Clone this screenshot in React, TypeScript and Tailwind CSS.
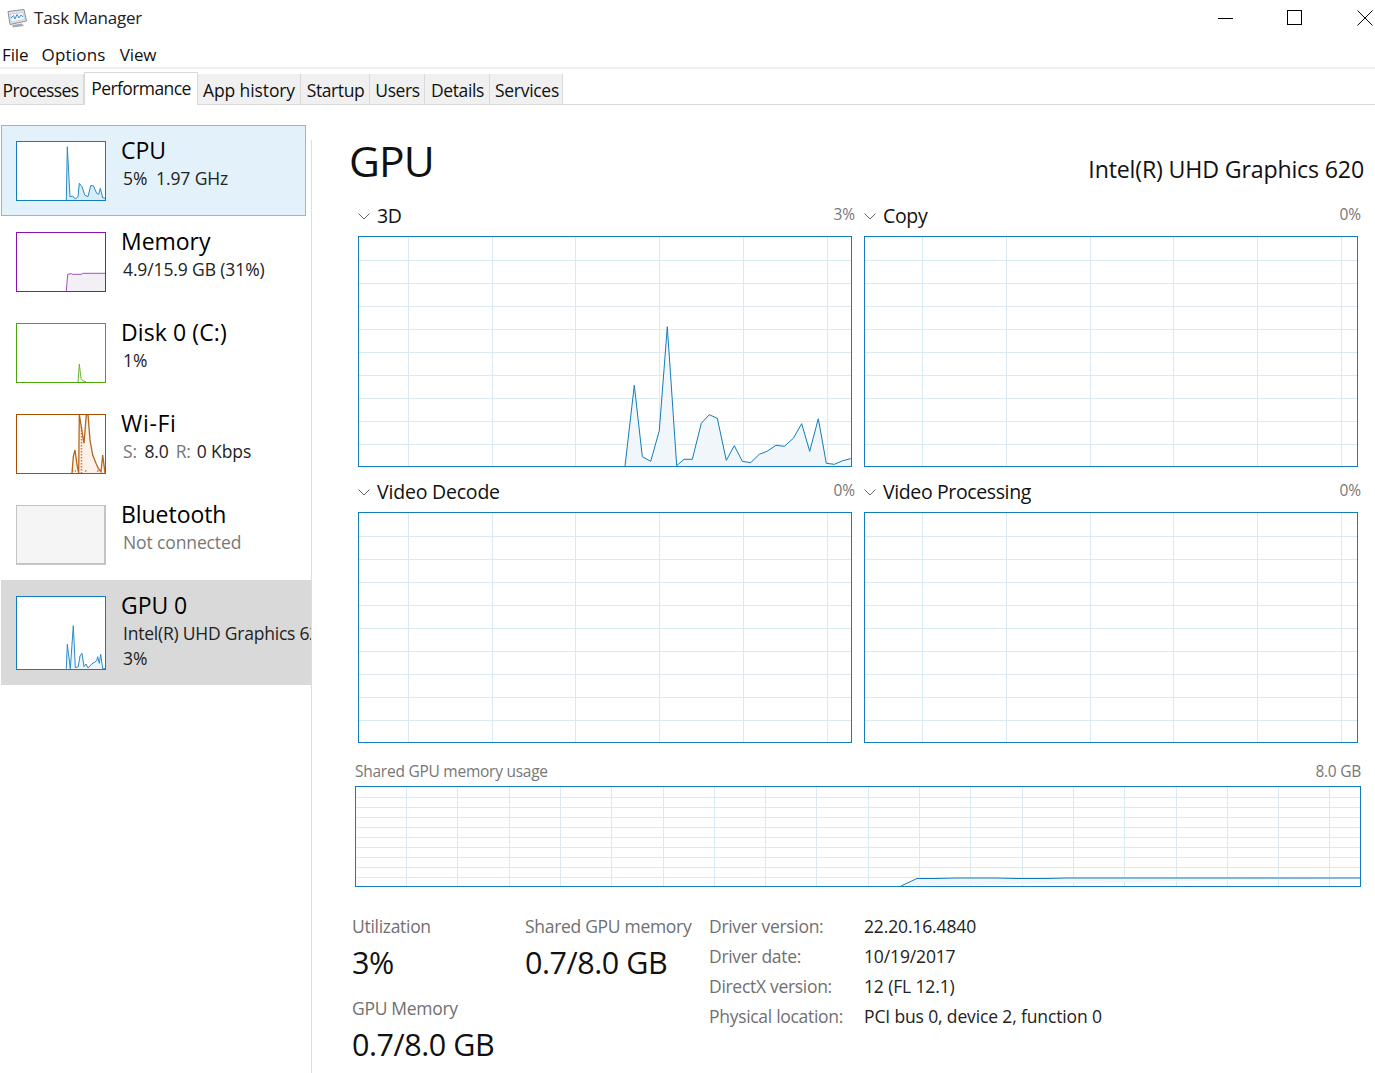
import React from "react";

type P = [number, number];
const BLUE = "#117dbb";
const GRID = "#d9eaf4";

function line(pts: P[]) {
  return pts.map((p) => p[0].toFixed(1) + "," + p[1].toFixed(1)).join(" ");
}

const gpu3d: P[] = [
  [15, 438],[43, 196],[67, 410],[92, 424],[118, 332],[142, 20],[170, 437],[192, 418],[217, 418],[244, 310],
  [268, 284],[292, 295],[319, 421],[343, 377],[367, 424],[392, 428],[418, 403],[441, 394],[468, 376],[493, 379],
  [520, 355],[545, 311],[569, 394],[595, 296],[619, 430],[643, 433],[668, 422],[692, 416],
].map(([x, y]) => [261 + x / 3, 83 + y / 3] as P);

function Spark({ pts, dx = 17, dy, stroke, fill, h = 58, sw = 1, extra }: { pts: P[]; dx?: number; dy: number; stroke: string; fill: string; h?: number; sw?: number; extra?: React.ReactNode }) {
  const p = pts.map(([x, y]) => [x / 3 - dx, y / 3 - dy] as P);
  const area = line([[p[0][0], h], ...p, [p[p.length - 1][0], h]]);
  return (
    <svg width="88" height={h} viewBox={`0 0 88 ${h}`} className="block">
      <polygon points={area} fill={fill} />
      {extra}
      <polyline points={line(p)} fill="none" stroke={stroke} strokeWidth={sw} />
    </svg>
  );
}

function Row({ name, color, children, graphH = 60, className = "", nameClass = "tracking-[-0.05px]", graph }: { name: string; color: string; children: React.ReactNode; graphH?: number; className?: string; nameClass?: string; graph?: React.ReactNode }) {
  return (
    <div className={`flex items-start overflow-hidden whitespace-nowrap ${className}`}>
      <div className="mt-[4px] w-[90px] shrink-0 border bg-white" style={{ borderColor: color, height: graphH }}>
        {graph}
      </div>
      <div className="ml-[15px] -mt-[1px] flex flex-col">
        <div className={`text-[23px] leading-[28px] text-black ${nameClass}`}>{name}</div>
        <div className="ml-[2px] flex flex-col text-[17.5px] leading-[28px] tracking-[-0.12px] text-[#222]">{children}</div>
      </div>
    </div>
  );
}

function Chevron() {
  return (
    <svg width="12" height="7" viewBox="0 0 12 7" className="shrink-0">
      <path d="M0.5 0.5L6 6L11.5 0.5" fill="none" stroke="#666" strokeWidth="1" />
    </svg>
  );
}

function EngineChart({ name, pct, vx, pts, nameClass = "tracking-[-0.32px]" }: { name: string; pct: string; vx: number[]; pts?: P[]; nameClass?: string }) {
  const hy = [23, 46, 69, 92, 115, 138, 161, 184, 207];
  return (
    <div className="flex w-[494px] flex-col">
      <div className="relative flex h-[40px] items-center">
        <div className="flex w-[19px] justify-start"><Chevron /></div>
        <span className={`text-[19.5px] leading-[28px] text-[#111] ${nameClass}`}>{name}</span>
        <span className="absolute right-[-3px] top-[8px] text-[15.5px] leading-[20px] tracking-[-0.15px] text-[#777]">{pct}</span>
      </div>
      <div className="h-[231px] w-[494px] border border-[#117dbb] bg-white">
        <svg width="492" height="229" viewBox="0 0 492 229" className="block">
          {hy.map((y) => (
            <line key={y} x1="0" x2="492" y1={y + 0.5} y2={y + 0.5} stroke={GRID} />
          ))}
          {vx.map((x) => (
            <line key={x} x1={x + 0.5} x2={x + 0.5} y1="0" y2="229" stroke={GRID} />
          ))}
          {pts && <polygon points={line([[pts[0][0], 229], ...pts, [492, 229]])} fill="#f1f6fa" />}
          {pts && <polyline points={line(pts)} fill="none" stroke={BLUE} strokeWidth="1" />}
        </svg>
      </div>
    </div>
  );
}

const leftV = [49, 133, 216, 300, 384, 468];
const rightV = [57, 141, 225, 308, 392, 476];
const sharedV = Array.from({ length: 19 }, (_, i) => Math.round(50 + i * 51.3));
const sharedH = [10, 20, 30, 40, 50, 60, 70, 80, 90];
const sharedLine: P[] = [[545, 99],[561, 91.5],[580, 91.5],[600, 91],[640, 91],[660, 91.5],[690, 91.5],[710, 91],[1004, 91]];

function Stat({ label, value, className = "" }: { label: string; value: string; className?: string }) {
  return (
    <div className={className}>
      <div className="text-[17.5px] leading-[24px] tracking-[-0.3px] text-[#707070]">{label}</div>
      <div className="mt-[4px] text-[30.5px] leading-[40px] tracking-[-0.45px] text-[#111]">{value}</div>
    </div>
  );
}

export default function App() {
  const tabs = [
    { t: "Processes", w: "w-[84px]", k: "tracking-[-0.6px] pr-[2px]" },
    { t: "Performance", w: "w-[114px]", k: "tracking-[-0.6px]" },
    { t: "App history", w: "w-[103px]", k: "tracking-[-0.1px]" },
    { t: "Startup", w: "w-[69px]", k: "tracking-[-0.4px] pl-[1px]" },
    { t: "Users", w: "w-[55px]", k: "tracking-[-0.4px] pl-[1px]" },
    { t: "Details", w: "w-[65px]", k: "tracking-[-0.4px] pl-[1px]" },
    { t: "Services", w: "w-[73px]", k: "tracking-[-0.3px] pl-[2px]" },
  ];
  return (
    <div className="flex h-[1073px] w-[1375px] flex-col overflow-hidden bg-white font-['Open_Sans',sans-serif] text-black">
      <div className="flex h-[36px] items-center justify-between">
        <div className="flex items-center pl-[6px]">
          <svg width="22" height="20" viewBox="0 0 22 20" className="mr-[6px]">
            <path d="M2 3.5L18 1.5L20.5 13L4 16.5Z" fill="#dfe6ee" stroke="#8a8f96" />
            <path d="M4 6L17 4.5L18.5 11.5L5.5 14Z" fill="#f5f9fd" stroke="#b0b5bb" strokeWidth="0.5" />
            <path d="M5 10L7.5 7.5L9 11L11 6.5L13 10L15 7L17 9" fill="none" stroke="#3a8fd0" strokeWidth="1" />
            <path d="M6 17L16 15.5L18 18L7 19.5Z" fill="#a8adb3" />
          </svg>
          <span className="text-[17px] leading-[24px] tracking-[-0.22px] text-[#222]">Task Manager</span>
        </div>
        <div className="flex items-center pr-[1px]">
          <svg width="16" height="16" viewBox="0 0 16 16" className="mr-[53px]"><path d="M0 8.5H15" stroke="#000" /></svg>
          <svg width="16" height="16" viewBox="0 0 16 16" className="mr-[54px]"><rect x="0.5" y="0.5" width="14" height="14" fill="none" stroke="#000" /></svg>
          <svg width="17" height="16" viewBox="0 0 17 16"><path d="M0.5 0.5L15.5 15.5M15.5 0.5L0.5 15.5" stroke="#000" /></svg>
        </div>
      </div>
      <div className="flex h-[33px] items-center border-b-2 border-[#f0f0f0] pl-[2px] pt-[7px] text-[17px] leading-[24px] tracking-[-0.1px] text-[#111]">
        <span className="mr-[13px]">File</span>
        <span className="mr-[14px] tracking-[0.2px]">Options</span>
        <span>View</span>
      </div>
      <div className="flex h-[36px] items-end border-b border-[#d9d9d9] text-[17.5px]">
        {tabs.map((x, i) =>
          i === 1 ? (
            <div key={x.t} className={`relative -mb-px flex h-[33px] ${x.w} ${x.k} items-start justify-center border-x border-t border-[#d9d9d9] bg-white pt-[1px] leading-[28px] text-[#111]`}>
              {x.t}
            </div>
          ) : (
            <div key={x.t} className={`flex h-[30px] ${x.w} ${x.k} items-center justify-center border-r border-[#d9d9d9] bg-[#f0f0f0] pt-[2px] leading-[28px] text-[#111]`}>
              {x.t}
            </div>
          )
        )}
      </div>
      <div className="flex flex-1">
        <div className="flex w-[311px] shrink-0 flex-col pl-px pt-[20px]">
          <Row
            name="CPU"
            color={BLUE}
            className="h-[91px] w-[305px] border border-[#7cc0e8] bg-[#e3f2fa] pl-[14px] pt-[11px]"
            graph={
              <Spark
                stroke="#2a8ac6"
                fill="#dbecf6"
                dy={17}
                pts={[[199, 225],[202, 65],[210, 215],[218, 213],[226, 222],[234, 215],[238, 175],[246, 185],[254, 210],[264, 215],[272, 182],[280, 182],[290, 205],[296, 208],[301, 190],[308, 218],[316, 220]]}
              />
            }
          >
            <span>5%&nbsp; 1.97 GHz</span>
          </Row>
          <Row
            name="Memory"
            color="#8b12ae"
            className="h-[91px] pl-[15px] pt-[12px]"
            graph={<Spark stroke="#a64fc4" fill="#f2eff5" dy={108} pts={[[199, 498],[203, 448],[215, 446],[218, 448],[246, 448],[248, 445],[316, 445]]} />}
          >
            <span>4.9/15.9 GB (31%)</span>
          </Row>
          <Row
            name="Disk 0 (C:)"
            color="#4da60c"
            nameClass="tracking-[0.1px]"
            className="h-[91px] pl-[15px] pt-[12px]"
            graph={<Spark stroke="#6cb33a" fill="#eef6e6" dy={24} pts={[[234, 246],[238, 192],[243, 235],[250, 243],[258, 245]]} />}
          >
            <span>1%</span>
          </Row>
          <Row
            name="Wi-Fi"
            color="#a74f01"
            nameClass="tracking-[0.7px]"
            className="h-[91px] pl-[15px] pt-[12px]"
            graph={
              <Spark
                stroke="#b5651d"
                fill="#fdf2ea"
                dy={15}
                sw={1.3}
                pts={[[216, 219],[220, 170],[225, 150],[232, 200],[236, 219],[238, 44],[252, 130],[259, 44],[264, 44],[270, 120],[278, 165],[288, 190],[295, 205],[303, 215],[308, 165],[315, 219]]}
                extra={<path d="M64.5 12V58M55 56H59M68 56H71M80 56H84" stroke="#ee6a2a" strokeWidth="1.5" strokeDasharray="1.5 1.5" fill="none" />}
              />
            }
          >
            <span><span className="text-[#777]">S:</span> <span className="ml-[3px]">8.0</span><span className="ml-[7px] text-[#777]">R:</span><span className="ml-[6px]">0 Kbps</span></span>
          </Row>
          <Row
            name="Bluetooth"
            color="#c4c4c4"
            className="h-[91px] pl-[15px] pt-[12px]"
            graph={<div className="h-full w-full border-b border-r border-[#c4c4c4] bg-[#f5f5f5]" />}
          >
            <span className="text-[#777]">Not connected</span>
          </Row>
          <Row
            name="GPU 0"
            color={BLUE}
            graphH={74}
            className="h-[105px] w-[310px] bg-[#d9d9d9] pl-[15px] pt-[12px]"
            graph={
              <Spark
                stroke="#2a8ac6"
                fill="#eef5fa"
                dy={197}
                h={72}
                pts={[[199, 806],[202, 733],[211, 806],[220, 677],[226, 803],[235, 800],[240, 768],[246, 760],[252, 800],[258, 792],[264, 804],[275, 792],[290, 782],[293, 770],[298, 790],[302, 763],[308, 806],[316, 806]]}
              />
            }
          >
            <span className="tracking-[-0.22px]">Intel(R) UHD Graphics 620</span>
            <span className="-mt-[3px]">3%</span>
          </Row>
        </div>
        <div className="mt-[35px] w-px shrink-0 bg-[#dddddd]" />
        <div className="flex min-w-0 flex-1 flex-col">
          <div className="flex h-[91px] items-start justify-between pl-[37px] pr-[11px]">
            <span className="mt-[23px] text-[42.5px] leading-[66px] tracking-[-0.8px] text-[#111]">GPU</span>
            <span className="mt-[46px] text-[23.2px] leading-[36px] tracking-[-0.18px] text-[#111]">Intel(R) UHD Graphics 620</span>
          </div>
          <div className="ml-[46px] grid w-[1000px] grid-cols-[494px_494px] gap-x-[12px] gap-y-[5px]">
            <EngineChart name="3D" pct="3%" vx={leftV} pts={gpu3d} />
            <EngineChart name="Copy" pct="0%" vx={rightV} />
            <EngineChart name="Video Decode" pct="0%" vx={leftV} nameClass="tracking-[-0.2px]" />
            <EngineChart name="Video Processing" pct="0%" vx={rightV} nameClass="tracking-[-0.38px]" />
          </div>
          <div className="ml-[43px] mb-[1px] mt-[14px] flex w-[1006px] items-center justify-between text-[15.5px] leading-[28px] tracking-[-0.25px] text-[#777]">
            <span>Shared GPU memory usage</span>
            <span>8.0 GB</span>
          </div>
          <div className="ml-[43px] h-[101px] w-[1006px] border border-[#117dbb]">
            <svg width="1004" height="99" viewBox="0 0 1004 99" className="block">
              {sharedH.map((y) => (
                <line key={y} x1="0" x2="1004" y1={y + 0.5} y2={y + 0.5} stroke={GRID} />
              ))}
              {sharedV.map((x) => (
                <line key={x} x1={x + 0.5} x2={x + 0.5} y1="0" y2="99" stroke={GRID} />
              ))}
              <polygon points={line(sharedLine)} fill="#f1f6fa" />
              <polyline points={line(sharedLine)} fill="none" stroke={BLUE} strokeWidth="1" />
            </svg>
          </div>
          <div className="ml-[40px] mt-[27px] flex">
            <div className="flex w-[173px] flex-col">
              <Stat label="Utilization" value="3%" />
              <Stat label="GPU Memory" value="0.7/8.0 GB" className="mt-[14px]" />
            </div>
            <Stat label="Shared GPU memory" value="0.7/8.0 GB" className="w-[184px]" />
            <div className="grid auto-rows-[30px] grid-cols-[155px_auto] text-[17.5px] leading-[24px] tracking-[-0.3px]">
              <span className="text-[#707070]">Driver version:</span>
              <span className="tracking-[-0.14px] text-[#222]">22.20.16.4840</span>
              <span className="text-[#707070]">Driver date:</span>
              <span className="tracking-[-0.14px] text-[#222]">10/19/2017</span>
              <span className="text-[#707070]">DirectX version:</span>
              <span className="tracking-[-0.14px] text-[#222]">12 (FL 12.1)</span>
              <span className="text-[#707070]">Physical location:</span>
              <span className="tracking-[-0.14px] text-[#222]">PCI bus 0, device 2, function 0</span>
            </div>
          </div>
        </div>
      </div>
    </div>
  );
}
